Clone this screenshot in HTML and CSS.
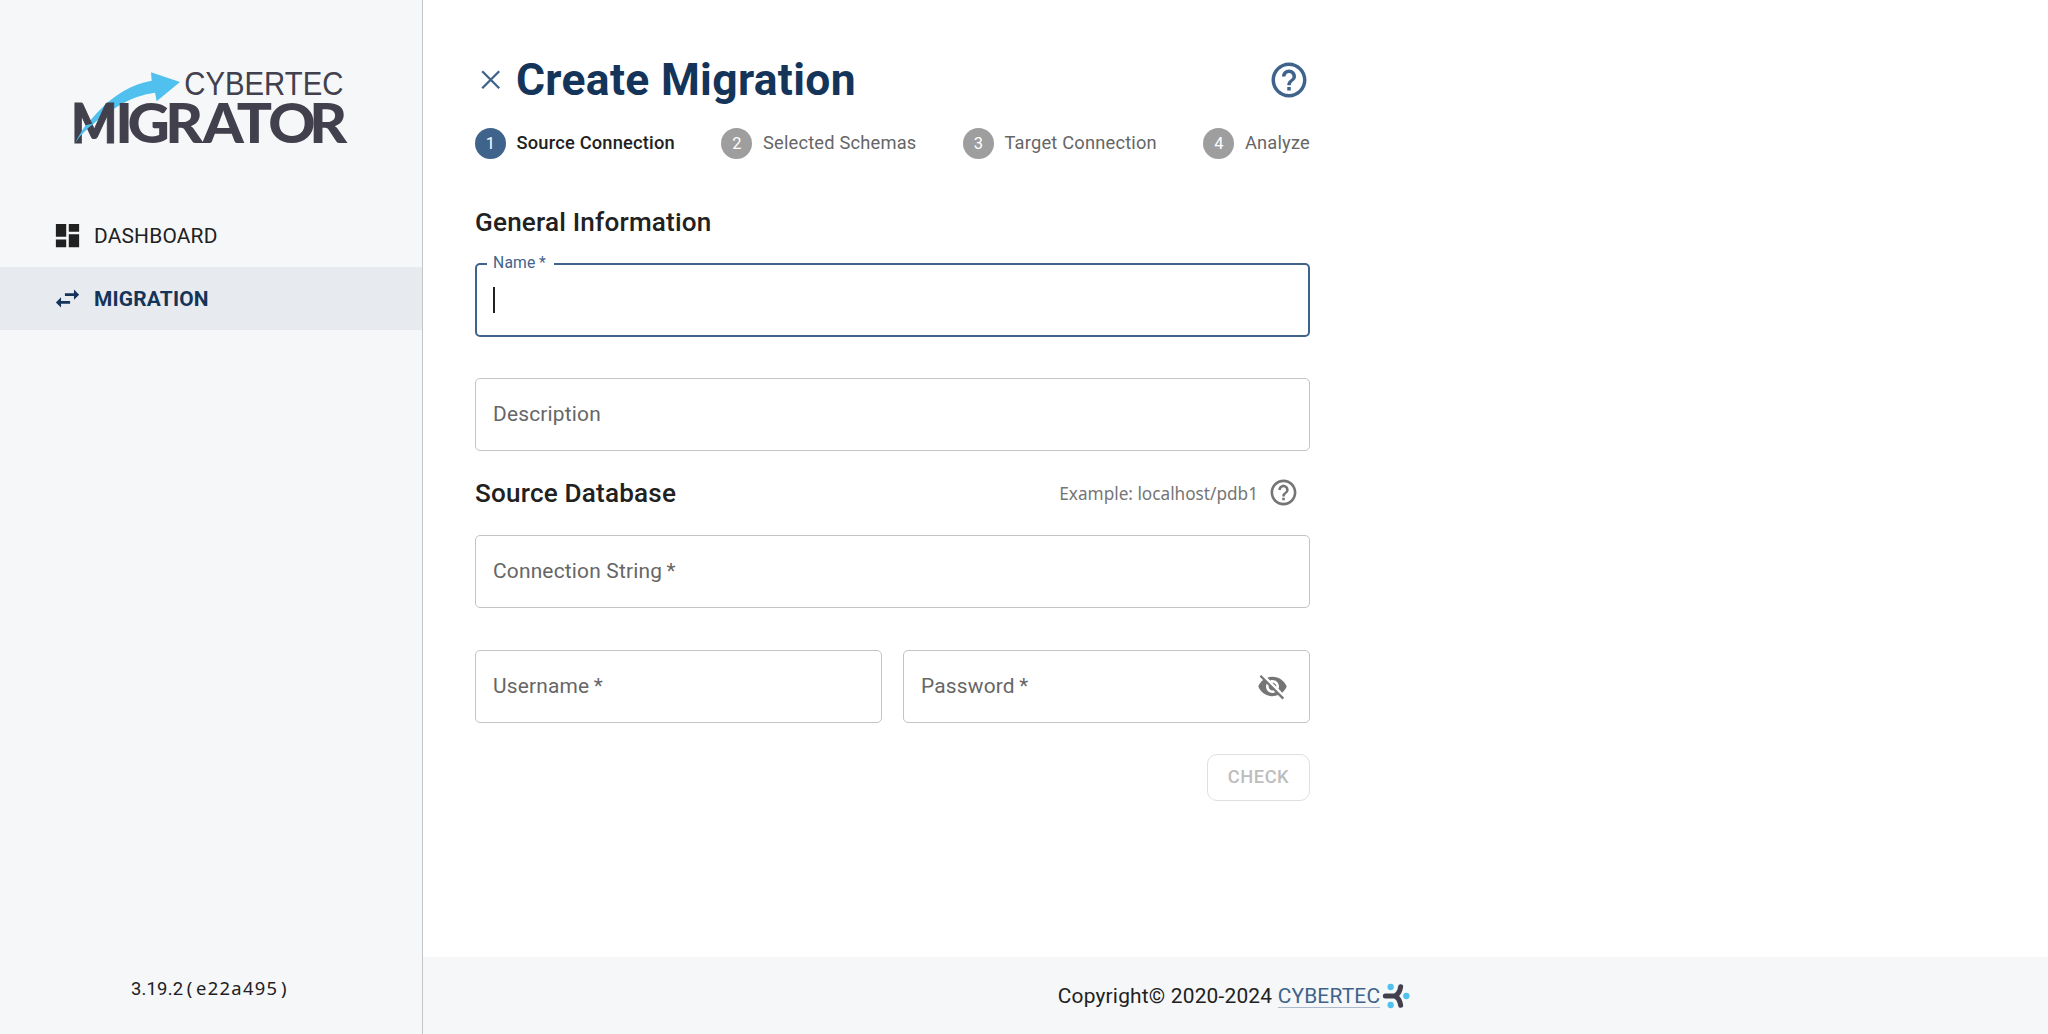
FILE: index.html
```html
<!DOCTYPE html>
<html lang="en">
<head>
<meta charset="utf-8">
<title>Create Migration</title>
<link rel="stylesheet" href="styles.css">
</head>
<body>
<aside class="sidebar">
  <svg class="logo" viewBox="0 0 900 270" role="img">
    <path class="logo-arrow" d="M46 248C70 205 150 82 275 62L273 37L360 66L290 124L285 98C215 106 150 150 104 188C80 206 62 224 46 248Z"/>
    <text class="logo-top" x="373" y="104" textLength="477" lengthAdjust="spacingAndGlyphs">CYBERTEC</text>
    <g class="logo-main">
      <text class="logo-m" transform="translate(34 250) scale(.87 1)">M</text>
      <text transform="translate(0 250) scale(1.05 1)" x="158 193 301 408 505 595 712">IGRATOR</text>
    </g>
    <path class="logo-arrow" d="M46 248C56 228 66 212 77 196L102 190C80 206 62 224 46 248Z"/>
  </svg>
  <nav class="nav">
    <a class="nav-item">
      <svg viewBox="0 0 24 24"><path d="M3 13h8V3H3v10zm0 8h8v-6H3v6zm10 0h8V11h-8v10zm0-18v6h8V3h-8z"/></svg>
      <span>DASHBOARD</span>
    </a>
    <a class="nav-item active">
      <svg viewBox="0 0 24 24"><path d="M6.99 11 3 15l3.990 4v-3H14v-2H6.990v-3zM21 9l-3.990-4v3H10v2h7.010v3L21 9z"/></svg>
      <span>MIGRATION</span>
    </a>
  </nav>
  <div class="version">3.19.2<span class="hash"><span class="paren">(</span>e22a495<span class="paren">)</span></span></div>
</aside>
<div class="page">
  <main class="content">
    <header class="title-row">
      <svg class="close" viewBox="0 0 31 31"><path d="M7.200 7.200l17 17M24.200 7.200l-17 17"/></svg>
      <h1>Create Migration</h1>
      <svg class="help-big" viewBox="0 0 24 24"><path d="M11 18h2v-2h-2v2zm1-16C6.480 2 2 6.480 2 12s4.480 10 10 10 10-4.480 10-10S17.520 2 12 2zm0 18c-4.410 0-8-3.590-8-8s3.590-8 8-8 8 3.590 8 8-3.590 8-8 8zm0-14c-2.210 0-4 1.790-4 4h2c0-1.100.9-2 2-2s2 .9 2 2c0 2-3 1.750-3 5h2c0-2.250 3-2.500 3-5 0-2.210-1.790-4-4-4z"/></svg>
    </header>
    <ol class="stepper">
      <li class="step current"><span class="num">1</span><span class="step-label">Source Connection</span></li>
      <li class="step"><span class="num">2</span><span class="step-label">Selected Schemas</span></li>
      <li class="step"><span class="num">3</span><span class="step-label">Target Connection</span></li>
      <li class="step"><span class="num">4</span><span class="step-label">Analyze</span></li>
    </ol>
    <h2 class="general">General Information</h2>
    <div class="field focused"><span class="float-label">Name&thinsp;*</span><span class="caret"></span></div>
    <div class="field description">Description</div>
    <div class="source-row">
      <h2>Source Database</h2>
      <span class="example">Example: localhost/pdb1</span>
      <svg class="help-small" viewBox="0 0 24 24"><path d="M11 18h2v-2h-2v2zm1-16C6.480 2 2 6.480 2 12s4.480 10 10 10 10-4.480 10-10S17.520 2 12 2zm0 18c-4.410 0-8-3.590-8-8s3.590-8 8-8 8 3.590 8 8-3.590 8-8 8zm0-14c-2.210 0-4 1.790-4 4h2c0-1.100.9-2 2-2s2 .9 2 2c0 2-3 1.750-3 5h2c0-2.250 3-2.500 3-5 0-2.210-1.790-4-4-4z"/></svg>
    </div>
    <div class="field">Connection String&thinsp;*</div>
    <div class="credentials">
      <div class="field">Username&thinsp;*</div>
      <div class="field">Password&thinsp;*
        <svg class="eye" viewBox="0 0 24 24"><path d="M12 7c2.760 0 5 2.240 5 5 0 .65-.13 1.260-.36 1.830l2.920 2.920c1.510-1.260 2.700-2.890 3.430-4.750-1.730-4.390-6-7.500-11-7.500-1.400 0-2.740.25-3.980.7l2.160 2.160C10.740 7.130 11.350 7 12 7zM2 4.270l2.280 2.280.46.46C3.080 8.300 1.780 10.020 1 12c1.730 4.390 6 7.500 11 7.500 1.550 0 3.030-.3 4.380-.84l.42.42L19.730 22 21 20.730 3.270 3 2 4.270zM7.530 9.800l1.550 1.550c-.05.21-.08.43-.08.65 0 1.660 1.340 3 3 3 .22 0 .44-.03.65-.08l1.550 1.550c-.67.33-1.410.53-2.200.53-2.760 0-5-2.240-5-5 0-.79.2-1.530.53-2.200zm4.310-.78 3.150 3.150.02-.16c0-1.660-1.340-3-3-3l-.17.01z"/></svg>
      </div>
    </div>
    <button class="check" disabled>CHECK</button>
  </main>
  <footer class="footer">
    <span class="copyright">Copyright© 2020-2024 <a class="link">CYBERTEC</a></span>
    <svg class="mark" viewBox="0 0 84 78"><g class="mark-dots"><circle cx="26" cy="12" r="9.500"/><circle cx="26" cy="66" r="9.500"/><circle cx="73" cy="39" r="9.500"/></g><path class="mark-arms" d="M10 39H38M56 11L54 20Q50 34 38 39Q50 44 54 58L56 67"/></svg>
  </footer>
</div>
</body>
</html>
```
FILE: styles.css
```css
* { box-sizing: border-box; }
body {
  margin: 0;
  height: 1034px;
  display: flex;
  background: #fff;
  color: #212121;
  font: 400 20.9px/1.5 Roboto, sans-serif;
  letter-spacing: 0.00938em;
}
h1, h2 { margin: 0; }
svg { flex: none; fill: currentColor; }

.sidebar {
  flex: none;
  width: 423px;
  display: flex;
  flex-direction: column;
  padding-top: 60px;
  background: #f5f7f9;
  border-right: 1px solid #c4c5c7;
}
.logo { width: 300px; height: 90px; margin-left: 60px; overflow: visible; }
.logo-arrow { fill: #50c0ee; }
.logo-top { font: 400 98px "Liberation Sans", sans-serif; fill: #42404d; letter-spacing: 0; }
.logo-main { font: 900 167px Lato, sans-serif; fill: #42404d; letter-spacing: 0; }
.logo-m { stroke: #42404d; stroke-width: 3; }
.nav { margin-top: 54px; }
.nav-item {
  height: 63px;
  display: flex;
  align-items: center;
  gap: 11px;
  padding-left: 52px;
}
.nav-item svg { width: 31px; height: 31px; }
.nav-item span { padding-top: 2px; }
.nav-item.active { background: #e7eaef; color: #14345a; font-weight: 700; }
.version {
  margin: auto 0 31px;
  padding-left: 131px;
  font-size: 18.4px;
  line-height: 28px;
}
.hash { font-family: "Noto Sans", sans-serif; letter-spacing: 1.3px; margin-left: 1px; }
.paren { display: inline-block; width: 11.8px; text-align: center; }

.page { flex: 1; display: flex; flex-direction: column; }
.content {
  flex: 1;
  width: 939px;
  padding: 52px 52px 0;
  display: flex;
  flex-direction: column;
}
.title-row { height: 55px; display: flex; align-items: center; gap: 10px; }
.title-row h1 {
  flex: 1;
  padding-top: 2px;
  color: #14345a;
  font-size: 44.4px;
  line-height: 55px;
  letter-spacing: 0.00735em;
}
.close { width: 31px; height: 31px; fill: none; stroke: #3f638b; stroke-width: 2.300; }
.help-big { width: 42px; height: 42px; color: #3f638b; }
.stepper {
  list-style: none;
  margin: 21px 0 0;
  padding: 0;
  display: flex;
  justify-content: space-between;
  font-size: 18.3px;
  line-height: 26px;
  letter-spacing: 0.01071em;
}
.step { display: flex; align-items: center; gap: 10.500px; height: 31px; color: #666; }
.step-label { padding-bottom: 2px; }
.num {
  width: 31px;
  height: 31px;
  border-radius: 50%;
  background: #9e9e9e;
  color: #fff;
  font-size: 16.5px;
  line-height: 31px;
  text-align: center;
}
.current { color: #212121; font-weight: 500; }
.current .num { background: #3f638b; font-weight: 400; }
h2 { font-size: 26.1px; font-weight: 500; line-height: 42px; letter-spacing: 0.0075em; }
.general { margin: 42px 0 20px; }
.field {
  flex: none;
  position: relative;
  height: 73px;
  display: flex;
  align-items: center;
  padding: 0 17px;
  border: 1px solid #c4c4c4;
  border-radius: 5px;
  color: #666;
}
.focused { height: 74px; border: 2px solid #3f638b; padding: 0 16px; }
.float-label {
  position: absolute;
  left: 10px;
  top: -14px;
  padding: 0 8px 0 6px;
  background: #fff;
  color: #3f638b;
  font-size: 15.7px;
  line-height: 24px;
}
.caret { width: 2px; height: 26px; background: #212121; }
.description { margin-top: 41px; }
.source-row { margin: 20px 0 21px; display: flex; align-items: center; height: 43px; }
.source-row h2 { flex: 1; }
.example { padding-top: 2px; font: 17.2px "Noto Sans", sans-serif; letter-spacing: 0; color: #757575; }
.help-small { width: 31px; height: 31px; margin: 0 11px 0 10px; color: #757575; }
.credentials { margin-top: 42px; display: grid; grid-template-columns: 1fr 1fr; gap: 21px; }
.eye { width: 31px; height: 31px; margin: 0 4px 0 auto; color: #757575; }
.check {
  align-self: flex-end;
  margin-top: 31px;
  width: 103px;
  height: 47px;
  padding: 0 0 2px;
  border: 1px solid #e0e0e0;
  border-radius: 10px;
  background: none;
  color: #bdbdbd;
  font: 500 18.3px Roboto, sans-serif;
  letter-spacing: 0.02857em;
}
.footer {
  flex: none;
  height: 77px;
  display: flex;
  align-items: center;
  justify-content: center;
  padding-right: 3px;
  background: #f5f7f9;
}
.copyright { padding-top: 2px; }
.link { color: #3f638b; box-shadow: inset 0 -1px #acb9cb; }
.mark { width: 28px; height: 26px; margin-left: 2px; }
.mark-dots { fill: #50c0ee; }
.mark-arms { fill: none; stroke: #42404d; stroke-width: 15; stroke-linecap: round; }
```
